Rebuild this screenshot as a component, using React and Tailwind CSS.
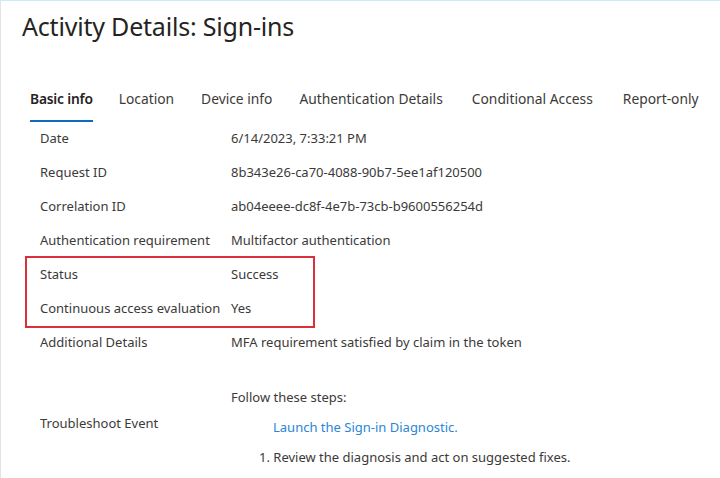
import React from "react";

const tabs = [
  { t: "Basic info", m: "mr-[26px]" },
  { t: "Location", m: "mr-[27px]" },
  { t: "Device info", m: "mr-[27px]" },
  { t: "Authentication Details", m: "mr-[29px]" },
  { t: "Conditional Access", m: "mr-[30px]" },
  { t: "Report-only", m: "" },
];

function Row({ label, value }) {
  return (
    <div className="flex h-[34px] items-center whitespace-nowrap">
      <div className="w-[191px] shrink-0">{label}</div>
      <div>{value}</div>
    </div>
  );
}

export default function App() {
  return (
    <div
      className="w-[720px] h-[478px] overflow-hidden bg-white border-t border-t-[#c7ecfb] border-l border-l-[#e4e4e4] text-[#3b3a39]"
      style={{ fontFamily: '"Noto Sans", "Open Sans", sans-serif' }}
    >
      <h1 className="pl-[21px] pt-[8px] text-[25px] leading-[34px] text-[#252423] font-normal tracking-[-0.2px] whitespace-nowrap">
        Activity Details: Sign-ins
      </h1>
      <div className="flex pl-[29px] mt-[45px] text-[13.8px] text-[#3b3a39] whitespace-nowrap">
        {tabs.map((tab, i) => (
          <div key={tab.t} className={tab.m}>
            <div className={"leading-[22px] " + (i === 0 ? "font-semibold text-[#252423] tracking-[-0.2px]" : "")}>{tab.t}</div>
            <div className={"mt-[10px] h-[2px] " + (i === 0 ? "bg-[#0f6cbd]" : "bg-transparent")} />
          </div>
        ))}
      </div>
      <div className="pl-[39px] text-[13px] text-[#3b3a39]">
        <Row label="Date" value="6/14/2023, 7:33:21 PM" />
        <Row label="Request ID" value="8b343e26-ca70-4088-90b7-5ee1af120500" />
        <Row label="Correlation ID" value="ab04eeee-dc8f-4e7b-73cb-b9600556254d" />
        <Row label="Authentication requirement" value="Multifactor authentication" />
        <div className="-ml-[15px] pl-[13px] w-[290px] border-2 border-[#d9303a] -my-[2px]">
          <Row label="Status" value="Success" />
          <Row label="Continuous access evaluation" value="Yes" />
        </div>
        <Row label="Additional Details" value="MFA requirement satisfied by claim in the token" />
        <div className="flex mt-[23px] whitespace-nowrap">
          <div className="w-[191px] shrink-0 flex items-center pb-[8px]">Troubleshoot Event</div>
          <div>
            <div className="h-[30px] flex items-center">Follow these steps:</div>
            <div className="h-[30px] flex items-center pl-[42px] text-[#2a86d6]">Launch the Sign-in Diagnostic.</div>
            <div className="h-[30px] flex items-center pl-[28px]">1. Review the diagnosis and act on suggested fixes.</div>
          </div>
        </div>
      </div>
    </div>
  );
}
